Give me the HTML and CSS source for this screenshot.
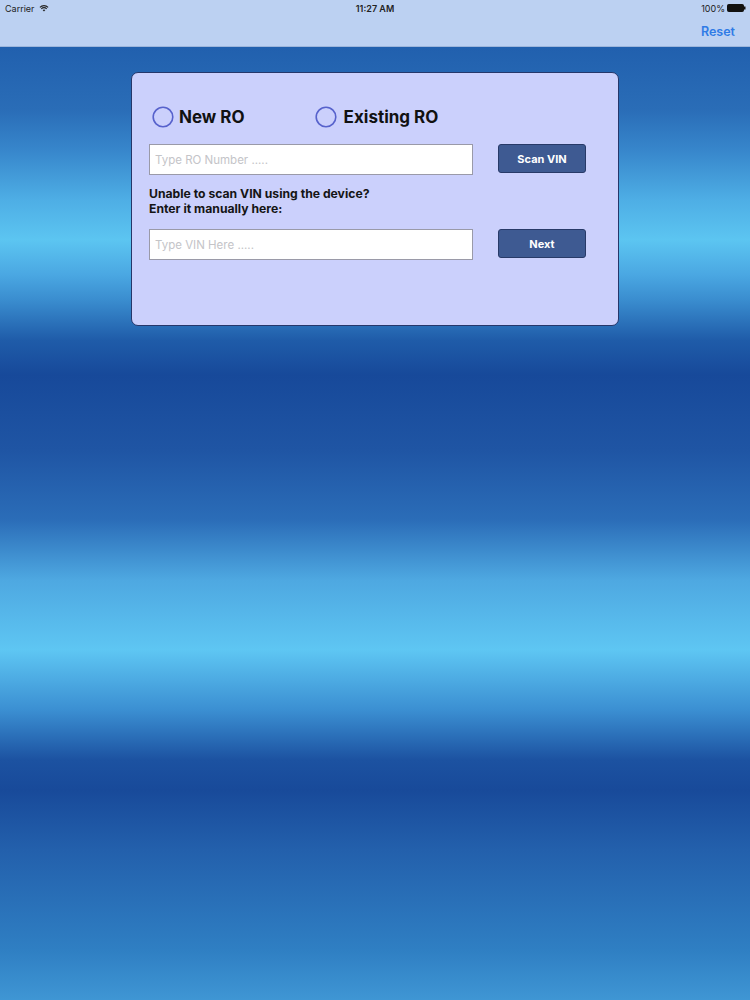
FILE: index.html
```html
<!DOCTYPE html>
<html>
<head>
<meta charset="utf-8">
<link rel="stylesheet" href="styles.css">
</head>
<body>
<div class="topbar">
  <div class="status">
    <div class="status-left">
      <span>Carrier</span>
      <svg class="wifi" width="10" height="8" viewBox="0 0 10 8"><path d="M5 7.6 L3.6 6.1 A2 2 0 0 1 6.4 6.1 Z" fill="#222"/><path d="M2.3 4.8 A3.8 3.8 0 0 1 7.7 4.8" fill="none" stroke="#222" stroke-width="1.1"/><path d="M0.9 3.3 A5.8 5.8 0 0 1 9.1 3.3" fill="none" stroke="#222" stroke-width="1.1"/></svg>
    </div>
    <div class="status-time">11:27 AM</div>
    <div class="status-right">
      <span>100%</span>
      <svg class="battery" width="19" height="8" viewBox="0 0 19 8"><rect x="0.5" y="0.5" width="16" height="7" rx="1" fill="#111" stroke="#111"/><rect x="17" y="2.5" width="1.5" height="3" fill="#111"/></svg>
    </div>
  </div>
  <div class="nav">
    <span class="reset">Reset</span>
  </div>
</div>
<div class="stage">
  <div class="card">
    <div class="radios">
      <label class="radio">
        <svg width="22" height="22" viewBox="0 0 22 22"><circle cx="11" cy="11" r="9.8" fill="none" stroke="#5762cc" stroke-width="1.6"/></svg>
        <span>New RO</span>
      </label>
      <label class="radio radio-second">
        <svg width="22" height="22" viewBox="0 0 22 22"><circle cx="11" cy="11" r="9.8" fill="none" stroke="#5762cc" stroke-width="1.6"/></svg>
        <span>Existing RO</span>
      </label>
    </div>
    <div class="row">
      <div class="field">Type RO Number .....</div>
      <div class="btn">Scan VIN</div>
    </div>
    <div class="hint">Unable to scan VIN using the device?<br>Enter it manually here:</div>
    <div class="row">
      <div class="field">Type VIN Here .....</div>
      <div class="btn">Next</div>
    </div>
  </div>
</div>
</body>
</html>
```
FILE: styles.css
```css
html, body {
  margin: 0;
  padding: 0;
}
body {
  width: 750px;
  height: 1000px;
  overflow: hidden;
  font-family: Inter, "Liberation Sans", sans-serif;
}
.topbar {
  height: 46px;
  background: #bcd1f2;
  border-bottom: 1px solid #9db6dc;
}
.status {
  height: 16px;
  display: flex;
  align-items: center;
  justify-content: space-between;
  padding: 0 4px 0 5px;
  font-size: 9px;
  color: #222;
  position: relative;
}
.status-left {
  display: flex;
  align-items: center;
  gap: 4px;
}
.status-time {
  position: absolute;
  left: 0;
  right: 0;
  text-align: center;
  font-weight: 600;
}
.status-right {
  display: flex;
  align-items: center;
  gap: 2px;
}
.nav {
  height: 30px;
  display: flex;
  align-items: center;
  justify-content: flex-end;
  padding-right: 15px;
}
.reset {
  font-size: 12.5px;
  font-weight: 600;
  color: #2f7be6;
}
.stage {
  height: 953px;
  padding-top: 25px;
  box-sizing: border-box;
  background: linear-gradient(to bottom,
    #2160ae 0px,
    #2a6db7 63px,
    #3786cb 103px,
    #4eaee5 153px,
    #5cc5f1 193px,
    #4aa7e2 228px,
    #3a8dcf 253px,
    #1f5ca9 293px,
    #17499a 328px,
    #1f55a4 403px,
    #2b6db8 473px,
    #4ea8e1 533px,
    #5ec6f3 603px,
    #3b8fd2 663px,
    #1c52a1 713px,
    #184a9a 743px,
    #2360ac 803px,
    #2f7fc3 903px,
    #3f96d4 953px);
}
.card {
  margin-left: 131px;
  width: 488px;
  height: 254px;
  box-sizing: border-box;
  background: #cbd0fc;
  border: 1px solid #26376a;
  border-radius: 7px;
  padding: 33px 0 0 17px;
  display: flex;
  flex-direction: column;
}
.radios {
  display: flex;
  align-items: center;
  margin-left: 3px;
  height: 22px;
}
.radio {
  display: flex;
  align-items: center;
  gap: 5px;
  font-size: 17px;
  font-weight: 700;
  color: #111;
}
.radio-second {
  margin-left: 70px;
  gap: 7px;
}
.row {
  display: flex;
  align-items: flex-start;
  gap: 25px;
}
.radios + .row {
  margin-top: 16px;
}
.field {
  width: 324px;
  height: 31px;
  box-sizing: border-box;
  background: #fff;
  border: 1px solid #9a9aa8;
  padding-left: 5px;
  display: flex;
  align-items: center;
  font-size: 11.5px;
  color: #c4c4c8;
}
.btn {
  width: 88px;
  height: 29px;
  box-sizing: border-box;
  background: #3e5a92;
  border: 1px solid #283a68;
  border-radius: 3px;
  color: #fff;
  font-size: 11px;
  font-weight: 700;
  display: flex;
  align-items: center;
  justify-content: center;
}
.hint {
  margin-top: 11px;
  margin-bottom: 13px;
  font-size: 12.2px;
  line-height: 15px;
  font-weight: 700;
  color: #151515;
}
```
